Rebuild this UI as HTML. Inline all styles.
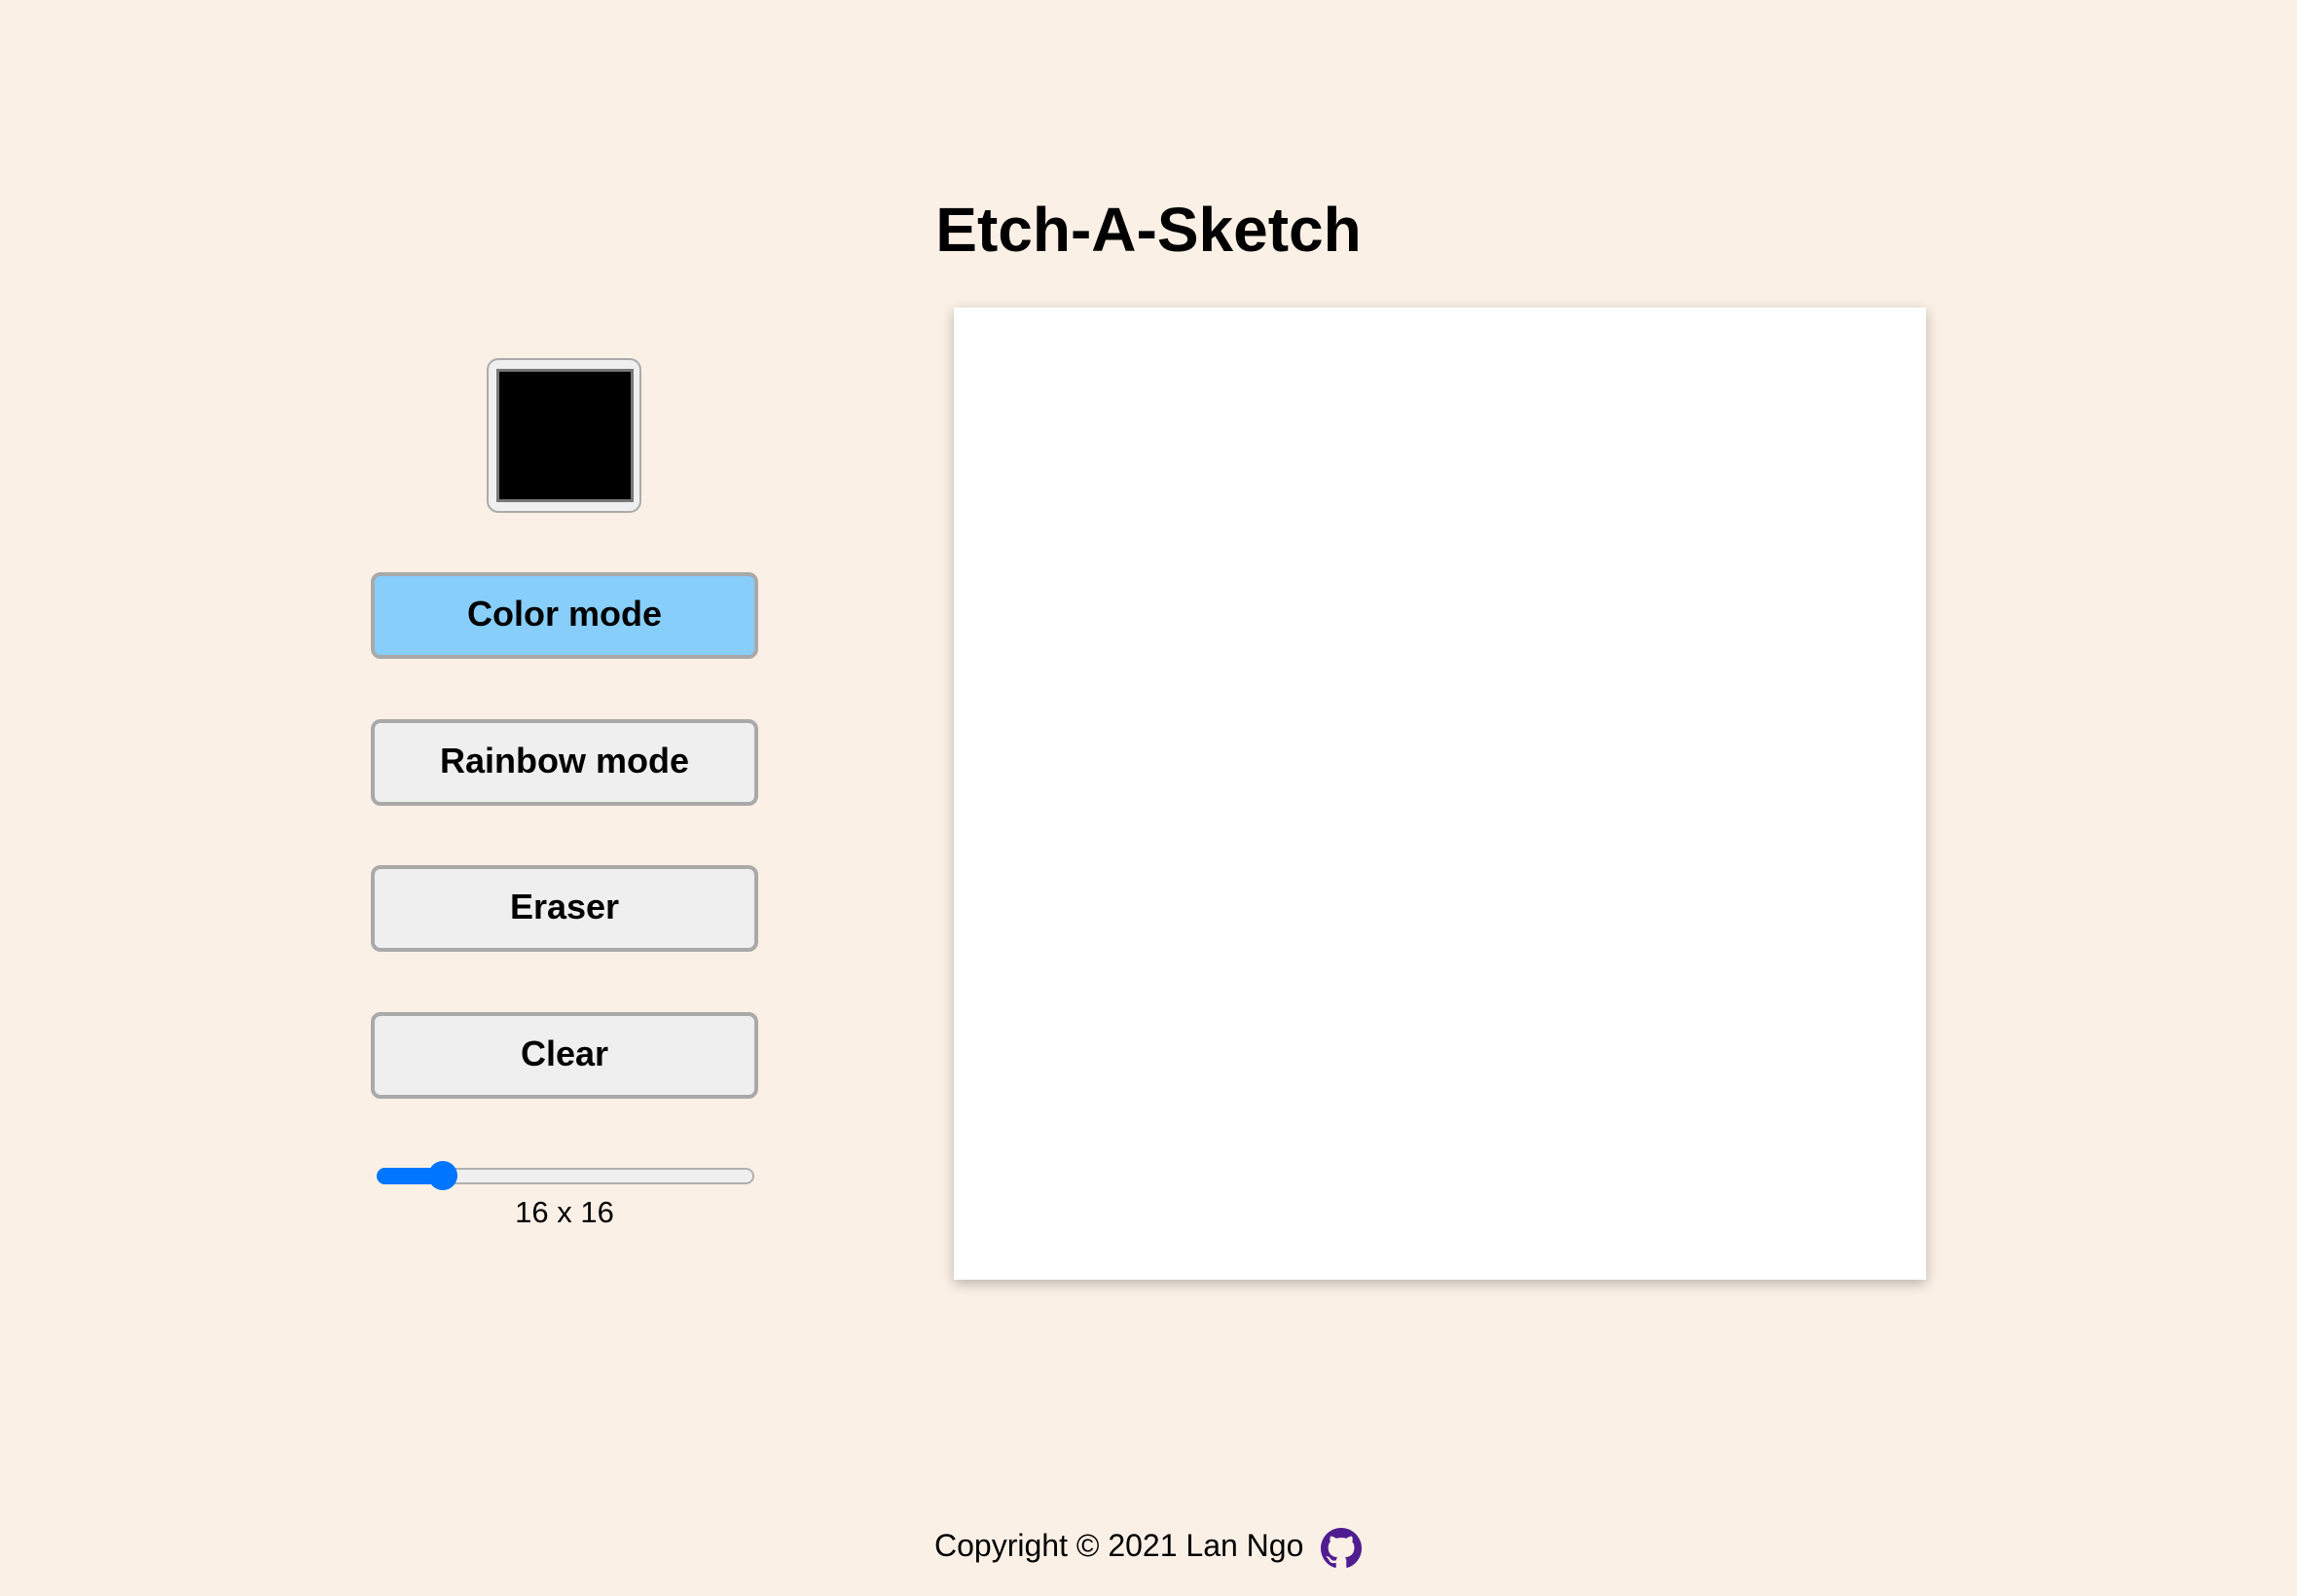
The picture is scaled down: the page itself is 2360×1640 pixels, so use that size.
<!DOCTYPE html>
<html><head><meta charset="utf-8"><style>
html,body{margin:0;padding:0;}
body{width:2360px;height:1640px;background:#faf0e6;position:relative;overflow:hidden;font-family:"Liberation Sans",Arial,sans-serif;color:#000;}
.a{position:absolute;}
h1{position:absolute;margin:0;left:0;width:2360px;text-align:center;top:196px;font-size:64px;font-weight:bold;line-height:80px;}
.board{left:980px;top:316px;width:999px;height:999px;background:#fff;box-shadow:0 4px 12px rgba(0,0,0,0.25);}
.sw{left:500px;top:368px;width:155px;height:155px;background:#efefef;border:2px solid #aaa;border-radius:12px;}
.sw div{position:absolute;left:8px;top:9px;width:135px;height:131px;background:#000;border:3px solid #777;}
.btn{left:381px;width:390px;height:81px;border:4px solid #a9a9a9;border-radius:10px;background:#efefef;text-align:center;line-height:78px;font-size:36px;font-weight:bold;}
.track{left:387px;top:1200px;width:384px;height:13px;background:#efefef;border:2px solid #b0b0b0;border-radius:9px;}
.fill{left:387px;top:1200px;width:70px;height:17px;background:#0075ff;border-radius:9px;}
.thumb{left:440px;top:1193px;width:30px;height:30px;border-radius:50%;background:#0075ff;}
.lbl{left:380px;width:400px;text-align:center;top:1226px;font-size:31px;line-height:40px;}
.foot{left:960px;top:1568px;font-size:32px;line-height:40px;white-space:nowrap;}
</style></head><body>
<h1>Etch-A-Sketch</h1>
<div class="a board"></div>
<div class="a sw"><div></div></div>
<div class="a btn" style="top:588px;background:#87cefa;">Color mode</div>
<div class="a btn" style="top:739px;">Rainbow mode</div>
<div class="a btn" style="top:889px;">Eraser</div>
<div class="a btn" style="top:1040px;">Clear</div>
<div class="a track"></div>
<div class="a fill"></div>
<div class="a thumb"></div>
<div class="a lbl">16 x 16</div>
<div class="a foot">Copyright © 2021 Lan Ngo</div>
<svg class="a" style="left:1357px;top:1570px" width="42" height="42" viewBox="0 0 16 16"><path fill="#4f1d8f" d="M8 0C3.58 0 0 3.58 0 8c0 3.54 2.290 6.53 5.470 7.59.4.07.55-.17.55-.38 0-.19-.01-.82-.01-1.49-2.010.37-2.530-.49-2.690-.94-.09-.23-.48-.94-.82-1.13-.28-.15-.68-.52-.01-.53.63-.01 1.080.58 1.230.82.72 1.210 1.870.87 2.330.66.07-.52.28-.87.51-1.070-1.780-.2-3.640-.89-3.640-3.950 0-.87.31-1.590.82-2.150-.08-.2-.36-1.020.08-2.120 0 0 .67-.21 2.200.82.64-.18 1.320-.27 2-.27.68 0 1.360.09 2 .27 1.530-1.040 2.200-.82 2.200-.82.44 1.100.16 1.920.08 2.120.51.56.82 1.270.82 2.150 0 3.070-1.870 3.750-3.650 3.950.29.25.54.73.54 1.480 0 1.070-.01 1.930-.01 2.200 0 .21.15.46.55.38A8.013 8.013 0 0016 8c0-4.420-3.580-8-8-8z"/></svg>
</body></html>
